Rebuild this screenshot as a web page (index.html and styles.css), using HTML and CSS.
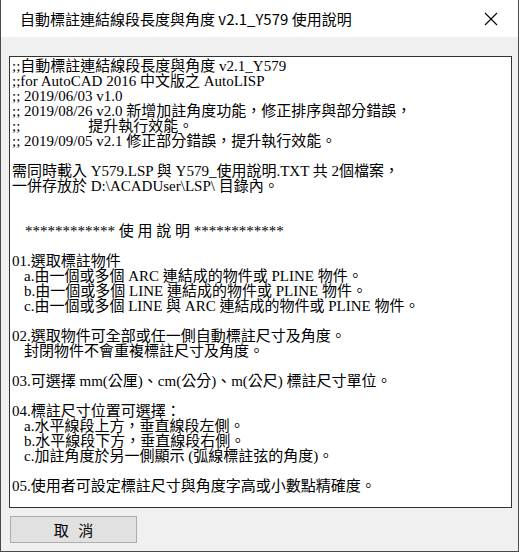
FILE: index.html
```html
<!DOCTYPE html>
<html lang="zh-Hant">
<head>
  <meta charset="UTF-8" />
  <title>自動標註連結線段長度與角度 v2.1_Y579 使用說明</title>
  <link rel="stylesheet" href="styles.css">
</head>
<body>
  <div class="window">
    <!-- Title bar -->
    <div class="titlebar">
      <span class="title">自動標註連結線段長度與角度 v2.1_Y579 使用說明</span>
      <svg class="close" viewBox="0 0 14 14" xmlns="http://www.w3.org/2000/svg">
        <path d="M1 1L13 13M13 1L1 13" stroke="#000" stroke-width="1.1" fill="none"/>
      </svg>
    </div>

    <div class="body">
      <div class="textbox">
        <div class="line">;;自動標註連結線段長度與角度 v2.1_Y579</div>
        <div class="line">;;for AutoCAD 2016 中文版之 AutoLISP</div>
        <div class="line">;; 2019/06/03 v1.0</div>
        <div class="line">;; 2019/08/26 v2.0 新增加註角度功能，修正排序與部分錯誤，</div>
        <div class="line">;;<span class="ind-wide">提升執行效能。</span></div>
        <div class="line">;; 2019/09/05 v2.1 修正部分錯誤，提升執行效能。</div>
        <div class="line"></div>
        <div class="line">需同時載入 Y579.LSP 與 Y579_使用說明.TXT 共 2個檔案，</div>
        <div class="line">一併存放於 D:\ACADUser\LSP\ 目錄內。</div>
        <div class="line"></div>
        <div class="line"></div>
        <div class="line ind-head"><span class="stars">************</span> 使 用 說 明 <span class="stars">************</span></div>
        <div class="line"></div>
        <div class="line">01.選取標註物件</div>
        <div class="line ind">a.由一個或多個 ARC 連結成的物件或 PLINE 物件。</div>
        <div class="line ind">b.由一個或多個 LINE 連結成的物件或 PLINE 物件。</div>
        <div class="line ind">c.由一個或多個 LINE 與 ARC 連結成的物件或 PLINE 物件。</div>
        <div class="line"></div>
        <div class="line">02.選取物件可全部或任一側自動標註尺寸及角度。</div>
        <div class="line ind">封閉物件不會重複標註尺寸及角度。</div>
        <div class="line"></div>
        <div class="line">03.可選擇 mm(公厘)、cm(公分)、m(公尺) 標註尺寸單位。</div>
        <div class="line"></div>
        <div class="line">04.標註尺寸位置可選擇：</div>
        <div class="line ind">a.水平線段上方，垂直線段左側。</div>
        <div class="line ind">b.水平線段下方，垂直線段右側。</div>
        <div class="line ind">c.加註角度於另一側顯示 (弧線標註弦的角度)。</div>
        <div class="line"></div>
        <div class="line">05.使用者可設定標註尺寸與角度字高或小數點精確度。</div>
      </div>
      <div class="actions">
        <button class="btn">取 消</button>
      </div>
    </div>
  </div>
</body>
</html>
```

FILE: styles.css
```css
html, body {
  margin: 0;
  padding: 0;
  background: #f0f0f0;
}

.window {
  width: 519px;
  height: 552px;
  box-sizing: border-box;
  border: 1px solid #4a4a4a;
  border-top: none;
  background: #f0f0f0;
  display: flex;
  flex-direction: column;
}

.titlebar {
  height: 37px;
  background: #fff;
  display: flex;
  align-items: center;
  justify-content: space-between;
  padding: 0 20px 0 19px;
  flex-shrink: 0;
}

.title {
  font-family: "Noto Sans CJK TC", "Noto Sans", sans-serif;
  font-size: 15px;
  color: #000;
  margin-top: -1px;
}

.close {
  width: 14px;
  height: 14px;
}

.body {
  flex: 1;
  display: flex;
  flex-direction: column;
  padding: 19px 6px 8px 8px;
}

.textbox {
  height: 452px;
  box-sizing: border-box;
  border: 1px solid #333;
  background: #fff;
  padding: 2px 2px 0;
  font-family: "Liberation Serif", "Noto Sans CJK TC", serif;
  font-size: 15px;
  line-height: 15px;
  color: #000;
  overflow: hidden;
}

.line {
  height: 15px;
  white-space: pre;
}

.ind {
  padding-left: 12px;
}

.ind-head {
  padding-left: 13px;
}

.ind-wide {
  padding-left: 68px;
}

.stars {
  letter-spacing: 0;
}

.actions {
  margin-top: 8px;
  display: flex;
}

.btn {
  width: 127px;
  height: 27px;
  margin-left: 1px;
  background: #e1e1e1;
  border: 1px solid #adadad;
  font-family: "Noto Sans CJK TC", sans-serif;
  font-size: 15px;
  word-spacing: 6px;
  color: #000;
  padding: 0;
}
```
